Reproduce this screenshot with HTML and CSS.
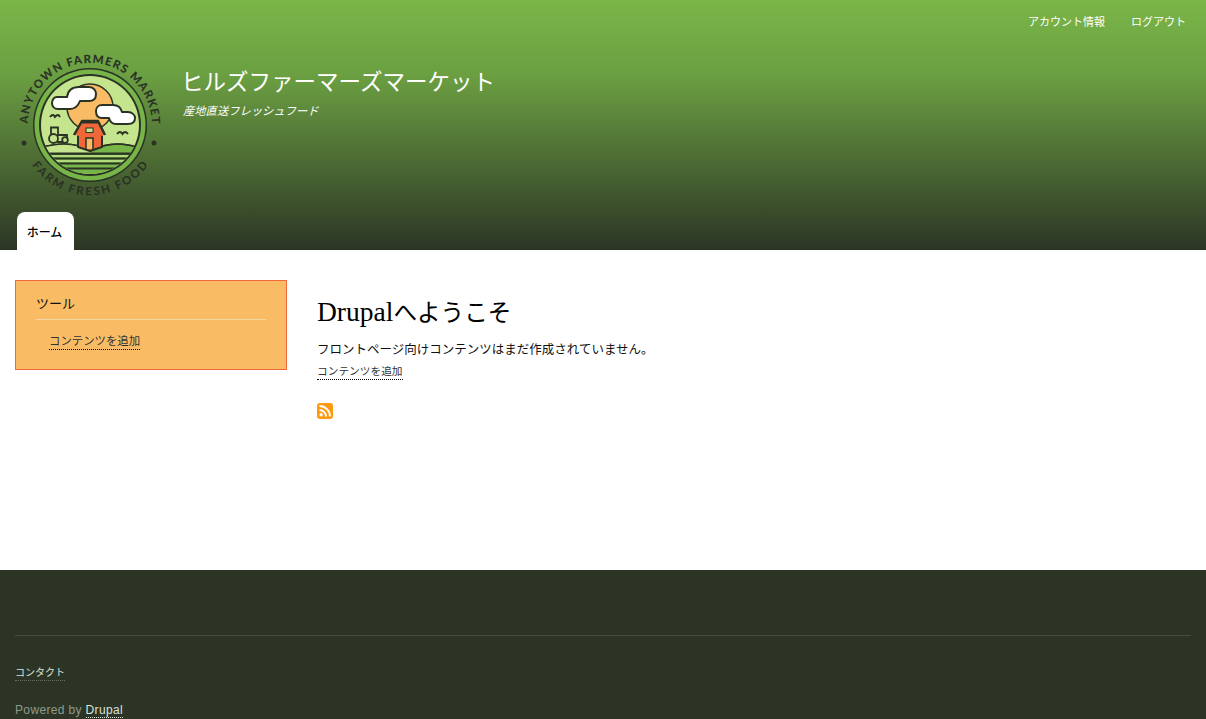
FILE: index.html
```html
<!DOCTYPE html>
<html lang="ja">
<head>
  <meta charset="utf-8">
  <title>ヒルズファーマーズマーケット</title>
  <link rel="stylesheet" href="styles.css">
</head>
<body>
  <header class="site-header">
    <nav class="secondary-menu">
      <a href="#">アカウント情報</a>
      <a href="#">ログアウト</a>
    </nav>
    <div class="branding">
      <a class="logo" href="#">
        <svg width="150" height="150" viewBox="0 0 150 150">
          <defs>
            <path id="arc-top" d="M13 75 A62 62 0 0 1 137 75"/>
            <path id="arc-bottom" d="M8.300 98.600 A71 71 0 0 0 141.700 98.600"/>
            <clipPath id="disc"><circle cx="75" cy="75" r="49"/></clipPath>
          </defs>
          <text class="logo-text"><textPath href="#arc-top" startOffset="50%" text-anchor="middle" textLength="192">ANYTOWN FARMERS MARKET</textPath></text>
          <text class="logo-text"><textPath href="#arc-bottom" startOffset="50%" text-anchor="middle" textLength="136">FARM FRESH FOOD</textPath></text>
          <circle cx="9" cy="93" r="2.500" fill="#2b3325"/>
          <circle cx="139" cy="93" r="2.500" fill="#2b3325"/>
          <circle cx="75" cy="75" r="57" fill="#2b3325"/>
          <circle cx="75" cy="75" r="55.500" fill="#77b548"/>
          <circle cx="75" cy="75" r="51" fill="#2b3325"/>
          <circle cx="75" cy="75" r="49" fill="#c4e58d"/>
          <g clip-path="url(#disc)">
            <circle cx="75" cy="57" r="23" fill="#f9bc64" stroke="#2b3325" stroke-width="1.500"/>
            <rect x="20" y="98" width="110" height="34" fill="#77b548"/>
            <path d="M25 98 C45 92 62 93 75 101 C90 93 108 92 125 98 V104 H25 Z" fill="#77b548" stroke="#2b3325" stroke-width="1.500"/>
            <path d="M25 98 C45 92 62 93 75 101 V104 H25 Z" fill="#c4e58d"/>
            <path d="M25 98 C45 92 62 93 75 101 C90 93 108 92 125 98" fill="none" stroke="#2b3325" stroke-width="1.500"/>
            <path d="M25 103.500 H125 M25 108.500 H125 M25 113.500 H125 M25 118.500 H125" stroke="#2b3325" stroke-width="2"/>
            <path d="M25 106 H125 M25 111 H125" stroke="#c4e58d" stroke-width="1.500"/>
          </g>
          <path d="M63 82 H87 V97 L75 101 L63 97 Z" fill="#f0673a" stroke="#2b3325" stroke-width="2" stroke-linejoin="round"/>
          <path d="M59 85 L67 71 H83 L90 85" fill="#f0673a" stroke="#2b3325" stroke-width="2.500" stroke-linejoin="round"/>
          <path d="M67 72 H83" stroke="#2b3325" stroke-width="3"/>
          <rect x="71" y="78" width="7" height="4.500" fill="#c4e58d" stroke="#2b3325"/>
          <path d="M71 99 V88 H78 V99" fill="#f9bc64" stroke="#2b3325" stroke-width="1.500"/>
          <path d="M62 85 H88" stroke="#f0673a" stroke-width="1.500"/>
          <g fill="none" stroke="#2b3325" stroke-width="1.800">
            <path d="M36 85 V77.500 H43 V85 H52 V92 H42" fill="#c4e58d"/>
            <circle cx="38.500" cy="88.500" r="4.500" fill="#c4e58d"/>
            <circle cx="50" cy="90" r="2.800" fill="#c4e58d"/>
            <path d="M35 67 Q38 63 40 67 Q43 63 45 67"/>
            <path d="M102 84 Q105 80 107.500 84 Q110 80 113 84"/>
          </g>
          <path d="M42 47 H52 C53 40 58 37 64 37 H74 C79 37 81 41 81 44 C81 49 78 51 74 51 H65 C63 56 60 59 55 59 H43 C39 59 37 56 37 53 C37 50 39 47 42 47 Z" fill="#fff" stroke="#2b3325" stroke-width="2" stroke-linejoin="round"/>
          <path d="M87 55 H98 C103 55 106 58 107 62 H113 C117 62 120 65 120 68 C120 72 117 74 113 74 H101 C97 74 95 72 94 68 H87 C83 68 81 65 81 61 C81 58 83 55 87 55 Z" fill="#fff" stroke="#2b3325" stroke-width="2" stroke-linejoin="round"/>
        </svg>
      </a>
      <div class="site-titles">
        <div class="site-name">ヒルズファーマーズマーケット</div>
        <div class="site-slogan">産地直送フレッシュフード</div>
      </div>
    </div>
    <nav class="main-menu">
      <a class="active" href="#">ホーム</a>
    </nav>
  </header>

  <main class="content-wrap">
    <aside class="sidebar">
      <section class="block">
        <h2>ツール</h2>
        <ul>
          <li><a href="#">コンテンツを追加</a></li>
        </ul>
      </section>
    </aside>
    <section class="content">
      <h1>Drupal<span class="title-ja">へようこそ</span></h1>
      <p>フロントページ向けコンテンツはまだ作成されていません。</p>
      <p><a href="#">コンテンツを追加</a></p>
      <a class="feed" href="#">
        <svg width="16" height="16" viewBox="0 0 16 16">
          <rect width="16" height="16" rx="3" fill="#ff9a0e"/>
          <circle cx="4.200" cy="11.800" r="1.700" fill="#fff"/>
          <path d="M2.500 7 A6.500 6.500 0 0 1 9 13.500 M2.500 3 A10.500 10.500 0 0 1 13 13.500" fill="none" stroke="#fff" stroke-width="1.900"/>
        </svg>
      </a>
    </section>
  </main>

  <footer class="site-footer">
    <nav class="footer-menu">
      <a href="#">コンタクト</a>
    </nav>
    <p class="powered">Powered by <a href="#">Drupal</a></p>
  </footer>
</body>
</html>
```

FILE: styles.css
```css
/* page */
html, body {
  height: 719px;
  overflow: hidden;
}
body {
  margin: 0;
  font-family: "Liberation Serif", "Noto Sans CJK JP", serif;
  font-size: 12.5px;
  color: #111;
  background: #fff;
}
a {
  color: #222;
  text-decoration: none;
}

/* header */
.site-header {
  height: 250px;
  box-sizing: border-box;
  display: flex;
  flex-direction: column;
  background: linear-gradient(to bottom, #7ab648 0%, #6b9f42 30%, #2c3525 100%);
  font-family: "Liberation Sans", "Noto Sans CJK JP", sans-serif;
}
.secondary-menu {
  display: flex;
  justify-content: flex-end;
  gap: 26px;
  padding: 14px 20px 0 0;
  height: 23px;
  font-size: 11px;
  line-height: 16px;
}
.secondary-menu a {
  color: #fff;
}
.branding {
  display: flex;
  padding: 13px 0 0 15px;
  height: 162px;
}
.logo {
  display: block;
  width: 150px;
  height: 150px;
}
.logo-text {
  font-family: "Lato", sans-serif;
  font-weight: 900;
  font-size: 11.500px;
  fill: #2b3325;
}
.site-titles {
  padding: 18px 0 0 18px;
  color: #fff;
}
.site-name {
  margin-left: -2px;
  font-size: 22.500px;
  line-height: 30px;
}
.site-slogan {
  margin-top: 5px;
  font-size: 11.300px;
  line-height: 16px;
  font-style: italic;
}
.main-menu {
  display: flex;
  padding-left: 17px;
}
.main-menu a {
  box-sizing: border-box;
  width: 57px;
  height: 38px;
  padding: 13px 2px 0 0;
  text-align: center;
  font-size: 12px;
  font-weight: 500;
  line-height: 16px;
  color: #000;
  background: #fff;
  border-radius: 8px 8px 0 0;
}

/* main area */
.content-wrap {
  height: 320px;
  box-sizing: border-box;
  display: flex;
  padding: 30px 15px 0;
}
.sidebar {
  width: 272px;
  margin-right: 30px;
}
.block {
  box-sizing: border-box;
  height: 90px;
  padding: 14px 20px 0;
  background: #f9bc64;
  border: 1px solid #f0673a;
}
.block h2 {
  margin: 0;
  padding-bottom: 7px;
  font-size: 13px;
  line-height: 17px;
  font-weight: normal;
  border-bottom: 1px solid #f3d7a4;
}
.block ul {
  list-style: none;
  margin: 14px 0 0;
  padding: 0 0 0 13px;
}
.block a,
.content p a {
  display: inline-block;
  line-height: 15px;
  border-bottom: 1px dotted #000;
  color: #333;
}
.block a {
  font-size: 11.400px;
}
.content p a {
  font-size: 10.700px;
}
.content h1 {
  margin: 14px 0 0;
  font-size: 27.500px;
  line-height: 36px;
  font-weight: normal;
  color: #000;
}
.title-ja {
  font-size: 23.600px;
}
.content p {
  margin: 11px 0 0;
  line-height: 16px;
}
.content p + p {
  margin-top: 5px;
}
.feed {
  display: block;
  width: 16px;
  height: 16px;
  margin-top: 23px;
}

/* footer */
.site-footer {
  height: 149px;
  box-sizing: border-box;
  padding: 65px 15px 0;
  background: #2c3525;
  font-family: "Liberation Sans", "Noto Sans CJK JP", sans-serif;
  font-size: 12px;
  color: #8f9a8c;
}
.footer-menu {
  border-top: 1px solid #454d3f;
  padding-top: 29px;
}
.footer-menu a {
  display: inline-block;
  font-size: 10px;
  line-height: 15px;
  color: #dde2da;
  border-bottom: 1px dotted #666c60;
}
.powered {
  margin: 21px 0 0;
  line-height: 16px;
  letter-spacing: 0.35px;
}
.powered a {
  color: #dde2da;
  border-bottom: 1px dotted #dde2da;
}
```
